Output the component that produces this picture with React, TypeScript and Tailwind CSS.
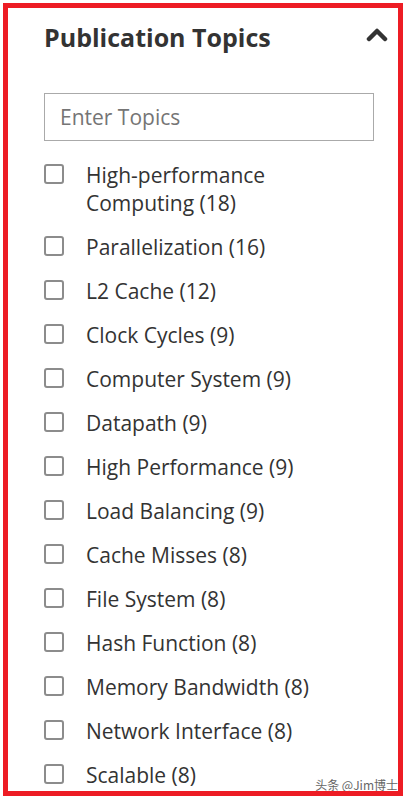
import React from 'react';

const topics: [string, number][] = [
  ['High-performance Computing', 18],
  ['Parallelization', 16],
  ['L2 Cache', 12],
  ['Clock Cycles', 9],
  ['Computer System', 9],
  ['Datapath', 9],
  ['High Performance', 9],
  ['Load Balancing', 9],
  ['Cache Misses', 8],
  ['File System', 8],
  ['Hash Function', 8],
  ['Memory Bandwidth', 8],
  ['Network Interface', 8],
  ['Scalable', 8],
];

const App: React.FC = () => {
  return (
    <div className="p-[3px] bg-white">
      <div
        className="relative w-[400px] h-[793px] border-[5px] border-[#ed1c24] overflow-hidden pl-[36px] pr-[10px] pt-[13px] text-[#333]"
        style={{ fontFamily: '"Open Sans", "Noto Sans", sans-serif' }}
      >
        {/* 标题 */}
        <div className="flex items-center justify-between">
          <h2 className="text-[25px] leading-[32px] font-bold">Publication Topics</h2>
          <svg width="22" height="16" viewBox="0 0 22 16" className="mb-[6px]">
            <polyline
              points="3,13 11,5 19,13"
              fill="none"
              stroke="#333"
              strokeWidth="4.5"
              strokeLinecap="round"
              strokeLinejoin="round"
            />
          </svg>
        </div>

        {/* 搜索框 */}
        <div className="mt-[40px] mr-[14px]">
          <input
            type="text"
            placeholder="Enter Topics"
            className="w-full h-[48px] border border-[#aaa] px-[15px] text-[21px] text-[#333] placeholder:text-[#757575] outline-none"
          />
        </div>

        {/* 列表 */}
        <ul className="mt-[20px] flex flex-col gap-[16px]">
          {topics.map(([name, count]) => (
            <li key={name} className="flex items-start">
              <span className="mt-[3px] w-[20px] h-[20px] shrink-0 border-2 border-[#8c8c8c] rounded-[3px]" />
              <span className="ml-[22px] max-w-[280px] text-[21px] leading-[28px]">
                {name} ({count})
              </span>
            </li>
          ))}
        </ul>

        {/* 水印 */}
        <div
          className="absolute right-0 bottom-0 text-[12px] leading-[12px] text-[#666]"
          style={{ fontFamily: '"Noto Sans CJK SC", sans-serif' }}
        >
          头条 @Jim博士
        </div>
      </div>
    </div>
  );
};

export default App;
